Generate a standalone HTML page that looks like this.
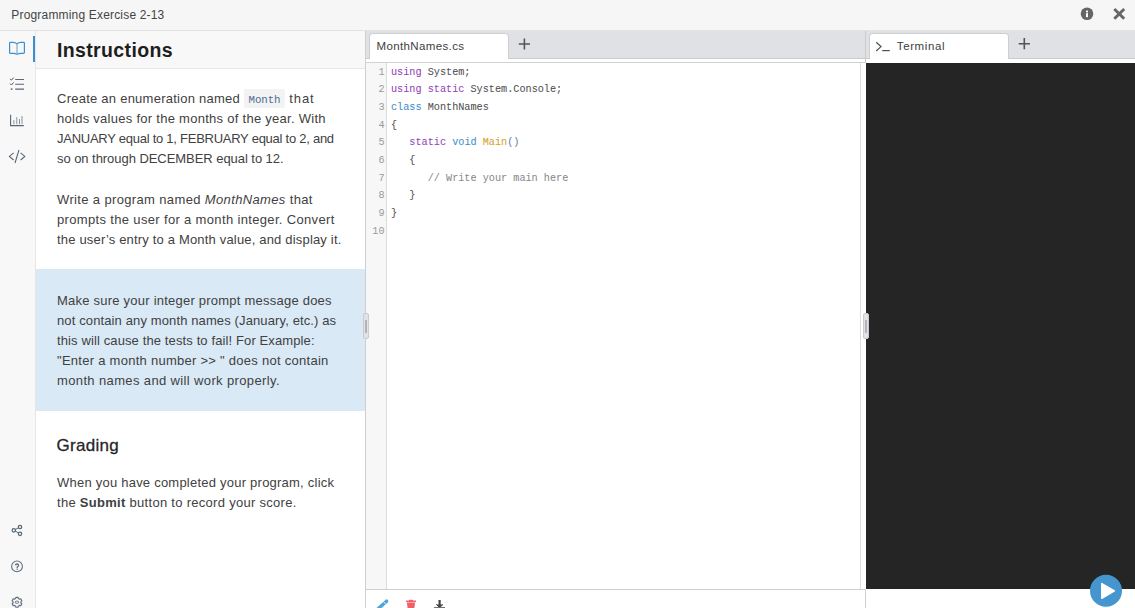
<!DOCTYPE html>
<html><head><meta charset="utf-8">
<style>
*{margin:0;padding:0;box-sizing:border-box}
html,body{width:1135px;height:608px;overflow:hidden;background:#fff;font-family:"Liberation Sans",sans-serif;color:#3a3a3a}
.abs{position:absolute}
.ln{position:absolute;white-space:nowrap;line-height:0;color:#414141}
svg{position:absolute;overflow:visible}
#top{left:0;top:0;width:1135px;height:30px;background:#f6f6f6}
#topb{left:0;top:30px;width:1135px;height:1px;background:#e3e3e3}
#side{left:0;top:31px;width:35px;height:577px;background:#f8f8f8}
#sideb{left:35px;top:31px;width:1px;height:577px;background:#e6e6e6}
#activebar{left:33px;top:36px;width:2px;height:26px;background:#3b8ed0}
#ihead{left:36px;top:31px;width:329px;height:37px;background:#f8f8f8}
#iheadb{left:36px;top:68px;width:329px;height:1px;background:#e6e6e6}
#note{left:36px;top:269px;width:329px;height:142px;background:#d9e9f6}
#codebox{left:244px;top:89px;width:41px;height:19px;background:#f3f3f3;border-radius:2px}
#codetxt{left:248.6px;top:100.1px;font-family:"Liberation Mono",monospace;font-size:10.8px;letter-spacing:-0.1px;color:#4d6e90}
#div1{left:365px;top:31px;width:1px;height:577px;background:#d0d0d0}
#etabs{left:366px;top:31px;width:499px;height:27px;background:#dfe1e5}
#etabsb{left:366px;top:58px;width:499px;height:1px;background:#c9cbce}
.tab{position:absolute;background:#fff;border:1px solid #cdcfd2;border-bottom:none;border-radius:4px 4px 0 0}
#etab{left:369px;top:33px;width:140px;height:26px}
#eline{left:366px;top:62px;width:500px;height:1px;background:#d2d2d2}
#gutter{left:366px;top:63px;width:20px;height:526px;background:#f7f7f7}
#gutterb{left:386px;top:63px;width:1px;height:526px;background:#dcdcdc}
#ebot{left:366px;top:589px;width:499px;height:1px;background:#cfcfcf}
#div2{left:865px;top:31px;width:1px;height:32px;background:#cbcbcb}
#div2b{left:865px;top:589px;width:1px;height:19px;background:#cfcfcf}
#evline{left:860px;top:63px;width:1px;height:526px;background:#dedede}
#ttabs{left:866px;top:31px;width:269px;height:27px;background:#dfe1e5}
#ttabsb{left:866px;top:58px;width:269px;height:1px;background:#c9cbce}
#ttab{left:869px;top:33px;width:140px;height:26px}
#tline{left:866px;top:62px;width:269px;height:1px;background:#d2d2d2}
#term{left:866px;top:63px;width:269px;height:526px;background:#252525}
.handle{position:absolute;width:6px;height:26px;background:#e0e2e6;border:1px solid #cacbcd;border-radius:2px}
.handle i{position:absolute;left:1px;top:6px;width:2px;height:13px;background:#b4b4b8}
.code{position:absolute;left:391px;font-family:"Liberation Mono",monospace;font-size:10.2px;line-height:0;white-space:pre;color:#505050;-webkit-text-stroke:0.05px currentColor}
.num{position:absolute;right:750.5px;font-family:"Liberation Mono",monospace;font-size:10.2px;line-height:0;color:#9a9a9a;text-align:right}
.kp{color:#9244b6}.kb{color:#3b8ccc}.fn{color:#d4a12a}.pr{color:#6482a6}.cm{color:#8a8a8a}
</style></head><body>
<div id="top" class="abs"></div><div id="topb" class="abs"></div>
<div id="side" class="abs"></div><div id="sideb" class="abs"></div>
<div id="activebar" class="abs"></div>
<div id="ihead" class="abs"></div><div id="iheadb" class="abs"></div>
<div id="note" class="abs"></div>
<div id="codebox" class="abs"></div><div id="codetxt" class="ln">Month</div>

<div id="div1" class="abs"></div>
<div id="etabs" class="abs"></div><div id="etabsb" class="abs"></div>
<div id="etab" class="tab"></div>
<div id="eline" class="abs"></div>
<div id="gutter" class="abs"></div><div id="gutterb" class="abs"></div>
<div id="ebot" class="abs"></div>

<div id="div2" class="abs"></div><div id="div2b" class="abs"></div><div id="evline" class="abs"></div>
<div id="ttabs" class="abs"></div><div id="ttabsb" class="abs"></div>
<div id="ttab" class="tab"></div>

<div id="term" class="abs"></div>

<div class="handle" style="left:363px;top:313px"><i></i></div>
<div class="handle" style="left:863px;top:313px"><i></i></div>

<!-- code -->
<div class="num" style="top:72.80px">1</div>
<div class="num" style="top:90.45px">2</div>
<div class="num" style="top:108.10px">3</div>
<div class="num" style="top:125.75px">4</div>
<div class="num" style="top:143.40px">5</div>
<div class="num" style="top:161.05px">6</div>
<div class="num" style="top:178.70px">7</div>
<div class="num" style="top:196.35px">8</div>
<div class="num" style="top:214.00px">9</div>
<div class="num" style="top:231.65px">10</div>
<div class="code" style="top:72.80px"><span class="kp">using</span> System;</div>
<div class="code" style="top:90.45px"><span class="kp">using</span> <span class="kp">static</span> System.Console;</div>
<div class="code" style="top:108.10px"><span class="kb">class</span> MonthNames</div>
<div class="code" style="top:125.75px">{</div>
<div class="code" style="top:143.40px">   <span class="kp">static</span> <span class="kb">void</span> <span class="fn">Main</span><span class="pr">()</span></div>
<div class="code" style="top:161.05px">   {</div>
<div class="code" style="top:178.70px">      <span class="cm">// Write your main here</span></div>
<div class="code" style="top:196.35px">   }</div>
<div class="code" style="top:214.00px">}</div>

<!-- top right icons -->
<svg style="left:0;top:0" width="1135" height="30">
  <circle cx="1087" cy="13.8" r="6.3" fill="#666"/>
  <rect x="1086" y="10.6" width="2" height="1.8" fill="#fff"/>
  <rect x="1086" y="13.2" width="2" height="4" fill="#fff"/>
  <path d="M1114.3 9 L1124.2 18.8 M1124.2 9 L1114.3 18.8" stroke="#666" stroke-width="2.9"/>
</svg>

<!-- sidebar icons -->
<svg style="left:0;top:0" width="36" height="608">
  <!-- book -->
  <path d="M9.6 52.6 V43 Q9.6 42.3 10.4 42.3 H13 Q15.3 42.3 17 43.7 Q18.7 42.3 21 42.3 H23.6 Q24.4 42.3 24.4 43 V52.6 Q24.4 53.3 23.6 53.3 H20.6 Q18.6 53.3 17 54.2 Q15.4 53.3 13.4 53.3 H10.4 Q9.6 53.3 9.6 52.6 Z" fill="none" stroke="#3b8ed0" stroke-width="1.2"/>
  <path d="M17 43.8 V53.6" stroke="#7fb3df" stroke-width="1.3"/>
  <!-- checklist -->
  <path d="M10 78.8 L11.4 80.2 L13.6 77.6 M10 83.6 L11.4 85 L13.6 82.4" fill="none" stroke="#4b5866" stroke-width="1"/>
  <rect x="10.8" y="88.4" width="1.6" height="1.4" fill="#4b5866"/>
  <path d="M15.2 79.5 H24 M15.2 84.3 H24 M15.2 89.1 H24" stroke="#5a6674" stroke-width="1.1"/>
  <!-- chart -->
  <path d="M10.6 114.8 V125.6 H23.8" fill="none" stroke="#5a6674" stroke-width="1.1"/>
  <path d="M13.9 120.2 V124.2 M16.8 117.2 V124.2 M19.5 119 V124.2 M22 116 V124.2" stroke="#7c8794" stroke-width="0.9"/>
  <!-- code -->
  <path d="M13.6 152.8 L9.4 156.4 L13.6 160 M20.6 152.8 L24.8 156.4 L20.6 160 M19 149.8 L15 163" fill="none" stroke="#5a6674" stroke-width="1.1"/>
  <!-- share -->
  <circle cx="13.8" cy="530.3" r="1.7" fill="none" stroke="#5b6877" stroke-width="1.25"/>
  <circle cx="20" cy="527" r="1.7" fill="none" stroke="#5b6877" stroke-width="1.25"/>
  <circle cx="20" cy="533.8" r="1.7" fill="none" stroke="#5b6877" stroke-width="1.25"/>
  <path d="M15.3 529.5 L18.5 527.8 M15.3 531.1 L18.5 533" stroke="#5b6877" stroke-width="1"/>
  <!-- question -->
  <circle cx="17" cy="566.4" r="5.4" fill="none" stroke="#617080" stroke-width="1.1"/>
  <path d="M15.4 565.2 Q15.5 564 17.1 564 Q18.6 564 18.6 565.3 Q18.6 566.2 17.3 566.8 L17.2 568" fill="none" stroke="#617080" stroke-width="1.3"/>
  <rect x="16.5" y="568.6" width="1.4" height="1.2" fill="#617080"/>
  <!-- gear -->
  <path d="M15.00 598.84 L15.63 598.54 L15.85 597.33 L18.15 597.33 L18.37 598.54 L19.00 598.84 L19.57 599.24 L20.73 598.82 L21.88 600.81 L20.94 601.61 L21.00 602.30 L20.94 602.99 L21.88 603.79 L20.73 605.78 L19.57 605.36 L19.00 605.76 L18.37 606.06 L18.15 607.27 L15.85 607.27 L15.63 606.06 L15.00 605.76 L14.43 605.36 L13.27 605.78 L12.12 603.79 L13.06 602.99 L13.00 602.30 L13.06 601.61 L12.12 600.81 L13.27 598.82 L14.43 599.24 Z" fill="none" stroke="#617080" stroke-width="1.15" stroke-linejoin="round"/>
  <rect x="15.3" y="601.2" width="3.4" height="2.1" rx="1" fill="none" stroke="#617080" stroke-width="1"/>
</svg>

<!-- tab icons -->
<svg style="left:0;top:0" width="1135" height="70">
  <path d="M518.8 44 H530 M524.4 38.4 V49.6" stroke="#555" stroke-width="1.6"/>
  <path d="M1018.7 43.7 H1029.9 M1024.3 38.1 V49.3" stroke="#555" stroke-width="1.6"/>
  <path d="M876.2 42.2 L881 46.6 L876.2 51" fill="none" stroke="#505050" stroke-width="1.2"/>
  <path d="M882.2 50.6 H889.8" stroke="#505050" stroke-width="1.2"/>
</svg>

<!-- bottom toolbar -->
<svg style="left:0;top:560" width="1135" height="48">
  <path d="M377.6 49.2 L386.6 41.2" stroke="#4fa3dc" stroke-width="3.5" stroke-linecap="round"/>
  <path d="M383.6 41.8 L385.8 44.2" stroke="#fff" stroke-width="0.8"/>
  <path d="M406 41.3 H416" stroke="#ef6168" stroke-width="1.5"/>
  <rect x="409" y="39.8" width="4" height="1.4" fill="#ef6168"/>
  <path d="M406.9 42.6 H415.1 L414.4 48 H407.6 Z" fill="#ef6168"/>
  <path d="M439.6 40 V46" stroke="#444" stroke-width="2.2"/>
  <path d="M436.2 44.4 L439.6 47.6 L443 44.4" fill="#444" stroke="#444" stroke-width="1"/>
  <path d="M434 47.6 H445" stroke="#666" stroke-width="1"/>
  <!-- run -->
  <circle cx="1106" cy="30.8" r="16" fill="#4596cf"/>
  <path d="M1101.8 23.6 L1101.8 38.2 L1114.4 30.9 Z" fill="#fff" stroke="#fff" stroke-width="1.6" stroke-linejoin="round"/>
</svg>

<div id="t_title" class="ln" style="left:11.30px;top:15.34px;font-size:12px;letter-spacing:0.178px;color:#444">Programming Exercise 2-13</div>
<div id="t_instr" class="ln" style="left:57.00px;top:50.24px;font-size:19.5px;letter-spacing:0.363px;font-weight:bold;color:#1e1e1e">Instructions</div>
<div id="p1a" class="ln" style="left:57.00px;top:98.50px;font-size:13px;letter-spacing:0.245px;">Create an enumeration named</div>
<div id="p1a2" class="ln" style="left:289.30px;top:98.50px;font-size:13px;letter-spacing:0.903px;">that</div>
<div id="p1b" class="ln" style="left:57.00px;top:118.50px;font-size:13px;letter-spacing:0.274px;">holds values for the months of the year. With</div>
<div id="p1c" class="ln" style="left:57.00px;top:138.50px;font-size:13px;letter-spacing:-0.256px;">JANUARY equal to 1, FEBRUARY equal to 2, and</div>
<div id="p1d" class="ln" style="left:57.00px;top:158.50px;font-size:13px;letter-spacing:-0.052px;">so on through DECEMBER equal to 12.</div>
<div id="p2a" class="ln" style="left:57.00px;top:199.50px;font-size:13px;letter-spacing:0.357px;">Write a program named <i>MonthNames</i> that</div>
<div id="p2b" class="ln" style="left:57.00px;top:219.50px;font-size:13px;letter-spacing:0.341px;">prompts the user for a month integer. Convert</div>
<div id="p2c" class="ln" style="left:57.00px;top:239.50px;font-size:13px;letter-spacing:0.178px;">the user’s entry to a Month value, and display it.</div>
<div id="p3a" class="ln" style="left:57.00px;top:300.80px;font-size:13px;letter-spacing:0.229px;">Make sure your integer prompt message does</div>
<div id="p3b" class="ln" style="left:57.00px;top:320.80px;font-size:13px;letter-spacing:0.122px;">not contain any month names (January, etc.) as</div>
<div id="p3c" class="ln" style="left:57.00px;top:340.80px;font-size:13px;letter-spacing:0.118px;">this will cause the tests to fail! For Example:</div>
<div id="p3d" class="ln" style="left:57.00px;top:360.80px;font-size:13px;letter-spacing:0.269px;">"Enter a month number &gt;&gt; " does not contain</div>
<div id="p3e" class="ln" style="left:57.00px;top:380.80px;font-size:13px;letter-spacing:0.368px;">month names and will work properly.</div>
<div id="t_grad" class="ln" style="left:56.60px;top:446.11px;font-size:17px;letter-spacing:0.287px;color:#262626;-webkit-text-stroke:0.3px #262626">Grading</div>
<div id="p4a" class="ln" style="left:57.00px;top:482.80px;font-size:13px;letter-spacing:0.230px;">When you have completed your program, click</div>
<div id="p4b" class="ln" style="left:57.00px;top:502.90px;font-size:13px;letter-spacing:0.290px;">the <b>Submit</b> button to record your score.</div>
<div id="t_tab1" class="ln" style="left:376.60px;top:46.02px;font-size:11.5px;letter-spacing:0.359px;color:#3e3e3e">MonthNames.cs</div>
<div id="t_tab2" class="ln" style="left:896.80px;top:46.02px;font-size:11.5px;letter-spacing:0.605px;color:#3e3e3e">Terminal</div>
</body></html>
